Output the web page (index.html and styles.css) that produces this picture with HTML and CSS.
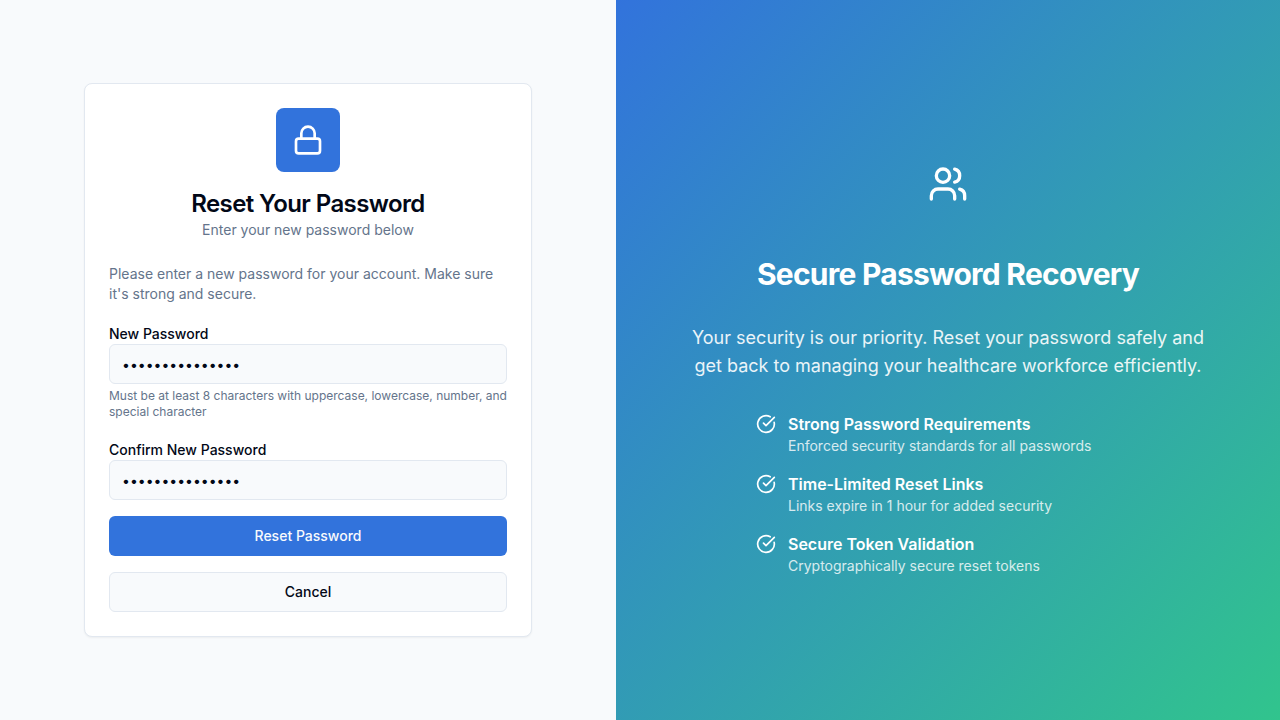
FILE: index.html
```html
<!DOCTYPE html>
<html lang="en">
<head>
<meta charset="utf-8">
<meta name="viewport" content="width=device-width, initial-scale=1">
<title>Reset Your Password</title>
<link rel="stylesheet" href="styles.css">
</head>
<body>
<div class="page">
  <main class="form-side">
    <section class="card">
      <header class="card-header">
        <div class="badge">
          <svg class="icon-lock" viewBox="0 0 24 24" aria-hidden="true"><rect width="18" height="11" x="3" y="11" rx="2" ry="2"/><path d="M7 11V7a5 5 0 0 1 10 0v4"/></svg>
        </div>
        <h1 class="card-title">Reset Your Password</h1>
        <p class="card-subtitle">Enter your new password below</p>
      </header>
      <form class="form">
        <p class="intro">Please enter a new password for your account. Make sure it's strong and secure.</p>
        <div class="field">
          <label class="label" for="new-password">New Password</label>
          <input class="input" id="new-password" type="password" value="NewSecure#12345" autocomplete="new-password">
          <p class="hint">Must be at least 8 characters with uppercase, lowercase, number, and special character</p>
        </div>
        <div class="field">
          <label class="label" for="confirm-password">Confirm New Password</label>
          <input class="input" id="confirm-password" type="password" value="NewSecure#12345" autocomplete="new-password">
        </div>
        <button class="button button-primary" type="submit">Reset Password</button>
        <button class="button button-outline" type="button">Cancel</button>
      </form>
    </section>
  </main>
  <aside class="promo">
    <div class="promo-content">
      <svg class="icon-users" viewBox="0 0 24 24" aria-hidden="true"><path d="M16 21v-2a4 4 0 0 0-4-4H6a4 4 0 0 0-4 4v2"/><circle cx="9" cy="7" r="4"/><path d="M22 21v-2a4 4 0 0 0-3-3.87"/><path d="M16 3.13a4 4 0 0 1 0 7.75"/></svg>
      <h2 class="promo-title">Secure Password Recovery</h2>
      <p class="promo-text">Your security is our priority. Reset your password safely and get back to managing your healthcare workforce efficiently.</p>
      <ul class="features">
        <li class="feature">
          <svg class="icon-check" viewBox="0 0 24 24" aria-hidden="true"><path d="M21.801 10A10 10 0 1 1 17 3.335"/><path d="m9 11 3 3L22 4"/></svg>
          <div><h3 class="feature-title">Strong Password Requirements</h3><p class="feature-text">Enforced security standards for all passwords</p></div>
        </li>
        <li class="feature">
          <svg class="icon-check" viewBox="0 0 24 24" aria-hidden="true"><path d="M21.801 10A10 10 0 1 1 17 3.335"/><path d="m9 11 3 3L22 4"/></svg>
          <div><h3 class="feature-title">Time-Limited Reset Links</h3><p class="feature-text">Links expire in 1 hour for added security</p></div>
        </li>
        <li class="feature">
          <svg class="icon-check" viewBox="0 0 24 24" aria-hidden="true"><path d="M21.801 10A10 10 0 1 1 17 3.335"/><path d="m9 11 3 3L22 4"/></svg>
          <div><h3 class="feature-title">Secure Token Validation</h3><p class="feature-text">Cryptographically secure reset tokens</p></div>
        </li>
      </ul>
    </div>
  </aside>
</div>
</body>
</html>
```
FILE: styles.css
```css
*, *::before, *::after { box-sizing: border-box; }
body, h1, h2, h3, p, ul { margin: 0; padding: 0; }
body {
  font-family: Inter, "Liberation Sans", sans-serif;
  font-size: 16px;
  line-height: 24px;
  color: #020817;
  background: #f8fafc;
}
svg { display: block; fill: none; stroke: currentColor; stroke-width: 2; stroke-linecap: round; stroke-linejoin: round; }
.page { display: flex; min-height: 100vh; }
.form-side {
  flex: 0 1 616px;
  display: flex;
  align-items: center;
  justify-content: center;
  padding: 32px;
}
.card {
  width: 100%;
  max-width: 448px;
  padding: 24px;
  background: #fff;
  border: 1px solid #e2e8f0;
  border-radius: 8px;
  box-shadow: 0 1px 2px rgba(0, 0, 0, 0.05);
}
.card-header { display: flex; flex-direction: column; align-items: center; text-align: center; margin-bottom: 24px; }
.badge {
  display: flex;
  align-items: center;
  justify-content: center;
  width: 64px;
  height: 64px;
  margin-bottom: 16px;
  border-radius: 8px;
  background: #3273dc;
  color: #fff;
}
.icon-lock { width: 32px; height: 32px; }
.card-title { font-size: 24px; line-height: 32px; font-weight: 600; letter-spacing: -0.025em; }
.card-subtitle { font-size: 14px; line-height: 20px; color: #64748b; }
.form { display: flex; flex-direction: column; gap: 16px; }
.intro { font-size: 14px; line-height: 20px; color: #64748b; }
.field { display: flex; flex-direction: column; }
.label { padding-top: 4px; font-size: 14px; line-height: 20px; font-weight: 500; }
.input {
  width: 100%;
  height: 40px;
  padding: 8px 12px;
  font: 14px/20px Inter, "Liberation Sans", sans-serif;
  color: #020817;
  background: #f8fafc;
  border: 1px solid #e2e8f0;
  border-radius: 6px;
}
.hint { margin-top: 4px; font-size: 12px; line-height: 16px; color: #64748b; }
.button {
  height: 40px;
  padding: 8px 16px;
  border: 1px solid transparent;
  border-radius: 6px;
  font: 500 14px/20px Inter, "Liberation Sans", sans-serif;
  cursor: pointer;
}
.button-primary { background: #3273dc; color: #f8fafc; }
.button-outline { background: #f8fafc; border-color: #e2e8f0; color: #020817; }
.promo {
  flex: 1 1 0;
  display: flex;
  align-items: center;
  justify-content: center;
  padding: 48px;
  color: #fff;
  background: linear-gradient(to bottom right, #3273dc, #31c48d);
}
.promo-content { display: flex; flex-direction: column; align-items: center; max-width: 528px; text-align: center; }
.icon-users { width: 40px; height: 40px; margin: 20px 0 52px; }
.promo-title { margin-bottom: 32px; font-size: 30px; line-height: 36px; font-weight: 700; letter-spacing: -0.025em; }
.promo-text { font-size: 18px; line-height: 28px; opacity: 0.9; }
.features { display: flex; flex-direction: column; gap: 16px; width: 100%; max-width: 384px; margin-top: 32px; list-style: none; text-align: left; }
.feature { display: flex; gap: 12px; }
.icon-check { flex: none; width: 20px; height: 20px; margin-top: 2px; }
.feature-title { font-size: 16px; line-height: 24px; font-weight: 600; }
.feature-text { font-size: 14px; line-height: 20px; opacity: 0.8; }
```
